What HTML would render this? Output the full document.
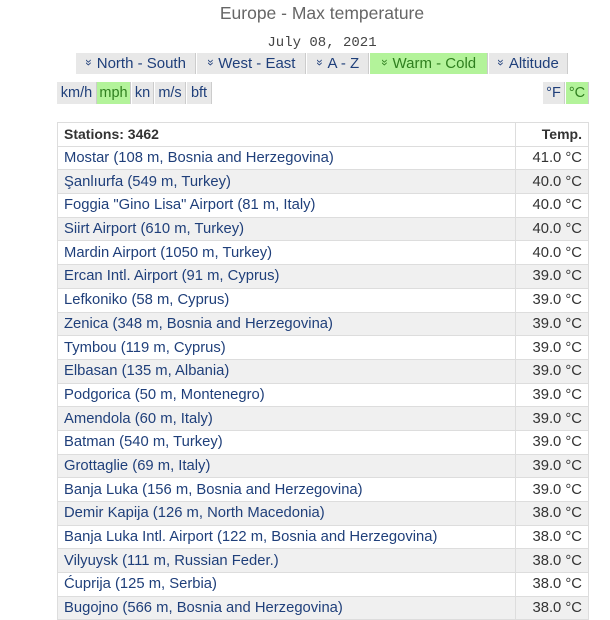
<!DOCTYPE html>
<html><head><meta charset="utf-8"><style>
body{margin:0;background:#fff;font-family:"Liberation Sans",Arial,sans-serif;width:610px;height:620px;overflow:hidden;position:relative}
.t{position:absolute;left:0;width:644px;text-align:center;top:3px;font-size:17.5px;color:#666}
.d{position:absolute;left:0;width:644px;text-align:center;top:35px;font-family:"Liberation Mono",monospace;font-size:14px;color:#444}
.b{position:absolute;background:#e8e8e8;color:#1f3f7a;font-size:15px;line-height:21px;text-align:center;border-right:1px solid #ccc;box-sizing:border-box;white-space:nowrap}
.b.g{background:#b3f39a;color:#2f7f1f}
.a{display:inline-block;transform:rotate(90deg);font-size:12px;margin-right:5px;position:relative;top:-2px}
.s{top:53px;height:21px}
.u{top:82px;height:22px;line-height:22px;font-size:14.5px}
table{position:absolute;left:57px;top:122px;width:532px;border-collapse:collapse;font-size:14.8px}
td{height:22.7px;padding:0 6px;border:1px solid #ddd;color:#1f3f7a;white-space:nowrap}
td+td{text-align:right;color:#333;width:60px}
tr:nth-child(odd) td{background:#f0f0f0}
tr:first-child td{background:#fff;font-weight:bold;color:#333;font-size:14px}
</style></head><body>
<div class="t">Europe - Max temperature</div>
<div class="d">July 08, 2021</div>
<div class="b s" style="left:76px;width:120px"><span class="a">»</span>North - South</div>
<div class="b s" style="left:197px;width:109px"><span class="a">»</span>West - East</div>
<div class="b s" style="left:307px;width:62px"><span class="a">»</span>A - Z</div>
<div class="b s g" style="left:370px;width:118px"><span class="a">»</span>Warm - Cold</div>
<div class="b s" style="left:489px;width:79px"><span class="a">»</span>Altitude</div>
<div class="b u" style="left:57px;width:40px">km/h</div>
<div class="b u g" style="left:97px;width:34px">mph</div>
<div class="b u" style="left:132px;width:22px">kn</div>
<div class="b u" style="left:155px;width:31px">m/s</div>
<div class="b u" style="left:187px;width:25px">bft</div>
<div class="b u" style="left:543px;width:22px">°F</div>
<div class="b u g" style="left:566px;width:23px">°C</div>
<table>
<tr><td>Stations: 3462</td><td>Temp.</td></tr>
<tr><td>Mostar (108 m, Bosnia and Herzegovina)</td><td>41.0 °C</td></tr>
<tr><td>Şanlıurfa (549 m, Turkey)</td><td>40.0 °C</td></tr>
<tr><td>Foggia "Gino Lisa" Airport (81 m, Italy)</td><td>40.0 °C</td></tr>
<tr><td>Siirt Airport (610 m, Turkey)</td><td>40.0 °C</td></tr>
<tr><td>Mardin Airport (1050 m, Turkey)</td><td>40.0 °C</td></tr>
<tr><td>Ercan Intl. Airport (91 m, Cyprus)</td><td>39.0 °C</td></tr>
<tr><td>Lefkoniko (58 m, Cyprus)</td><td>39.0 °C</td></tr>
<tr><td>Zenica (348 m, Bosnia and Herzegovina)</td><td>39.0 °C</td></tr>
<tr><td>Tymbou (119 m, Cyprus)</td><td>39.0 °C</td></tr>
<tr><td>Elbasan (135 m, Albania)</td><td>39.0 °C</td></tr>
<tr><td>Podgorica (50 m, Montenegro)</td><td>39.0 °C</td></tr>
<tr><td>Amendola (60 m, Italy)</td><td>39.0 °C</td></tr>
<tr><td>Batman (540 m, Turkey)</td><td>39.0 °C</td></tr>
<tr><td>Grottaglie (69 m, Italy)</td><td>39.0 °C</td></tr>
<tr><td>Banja Luka (156 m, Bosnia and Herzegovina)</td><td>39.0 °C</td></tr>
<tr><td>Demir Kapija (126 m, North Macedonia)</td><td>38.0 °C</td></tr>
<tr><td>Banja Luka Intl. Airport (122 m, Bosnia and Herzegovina)</td><td>38.0 °C</td></tr>
<tr><td>Vilyuysk (111 m, Russian Feder.)</td><td>38.0 °C</td></tr>
<tr><td>Ćuprija (125 m, Serbia)</td><td>38.0 °C</td></tr>
<tr><td>Bugojno (566 m, Bosnia and Herzegovina)</td><td>38.0 °C</td></tr>
</table>
</body></html>
